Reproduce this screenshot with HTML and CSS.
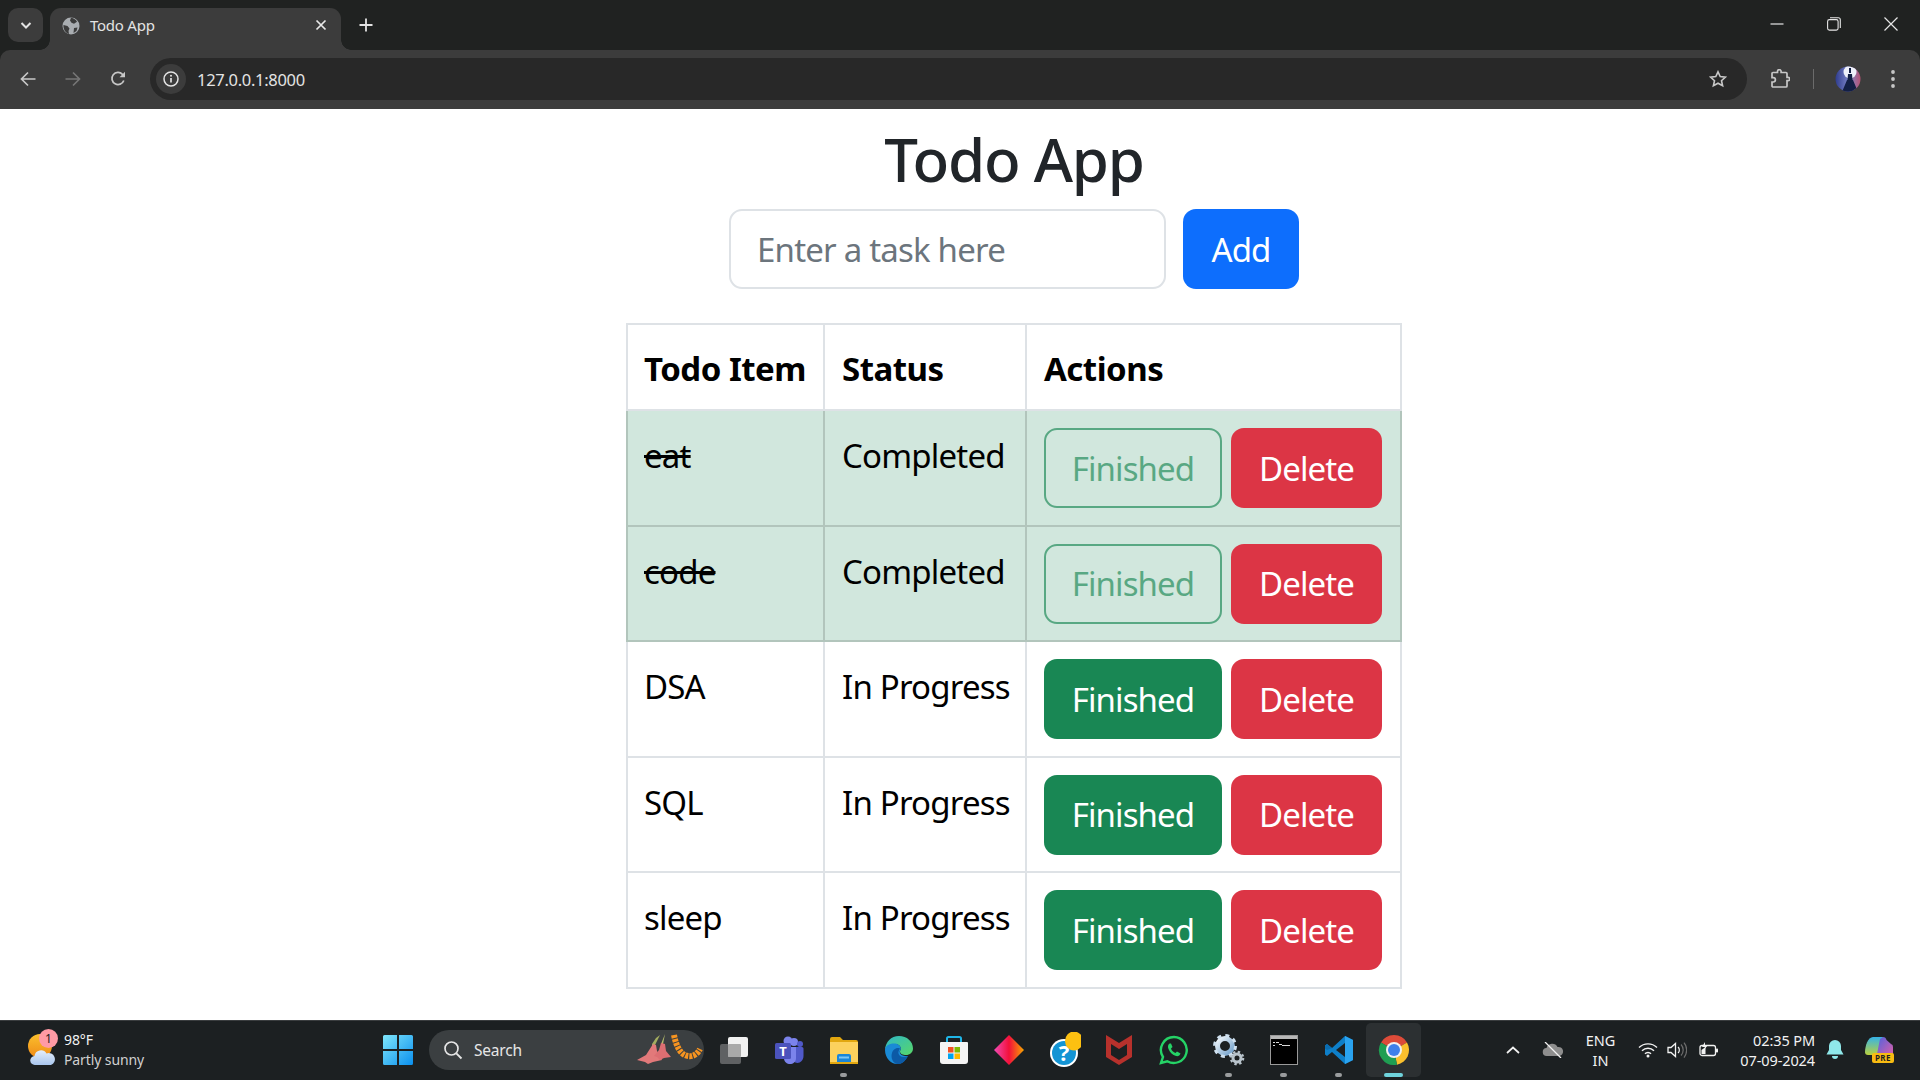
FILE: index.html
```html
<!DOCTYPE html>
<html lang="en">
<head>
<meta charset="utf-8">
<title>Todo App</title>
<link rel="stylesheet" href="styles.css">
</head>
<body>
<div class="screen">
  <header class="tabstrip">
    <div class="tab-search"><svg width="14" height="14" viewBox="0 0 14 14"><path d="M2.5 5l4.5 4.5L11.500 5" fill="none" stroke="#e3e3e3" stroke-width="2"/></svg></div>
    <div class="tab">
      <svg class="globe" width="18" height="18" viewBox="0 0 18 18"><circle cx="9" cy="9" r="8.500" fill="#a9adb1"/><path d="M9 .8c3 .5 5 2 6 4l-3 2-2.500-1L8 3.500zM1.500 8l4 1 2 2.500-1 2.500.5 3C3.500 16 1 12 1.500 8zM12 11l3.500-.5-1 3.500-3 2z" fill="#3c3c3c"/></svg>
      <span class="tab-title">Todo App</span>
      <svg class="tab-close" width="12" height="12" viewBox="0 0 12 12"><path d="M1.500 1.500l9 9M10.500 1.500l-9 9" stroke="#e8e8e8" stroke-width="1.700"/></svg>
    </div>
    <svg class="new-tab" width="14" height="14" viewBox="0 0 14 14"><path d="M7 .5v13M.5 7h13" stroke="#e3e3e3" stroke-width="1.800"/></svg>
    <div class="win-controls">
      <svg width="14" height="14" viewBox="0 0 14 14"><path d="M.5 7h13" stroke="#e6e6e6" stroke-width="1.200"/></svg>
      <svg width="14" height="14" viewBox="0 0 14 14"><rect x=".6" y="2.600" width="10.500" height="10.500" rx="1.800" fill="none" stroke="#e6e6e6" stroke-width="1.100"/><path d="M3 .7h8.300a2 2 0 0 1 2 2V11" fill="none" stroke="#e6e6e6" stroke-width="1.100"/></svg>
      <svg width="14" height="14" viewBox="0 0 14 14"><path d="M.5.500l13 13M13.500.500l-13 13" stroke="#e6e6e6" stroke-width="1.200"/></svg>
    </div>
  </header>

  <nav class="toolbar">
    <svg class="nav-icon" width="16" height="16" viewBox="0 0 16 16"><path d="M15.500 8H1.500M8 1.500L1.500 8 8 14.500" fill="none" stroke="#c7c7c7" stroke-width="1.700"/></svg>
    <svg class="nav-icon" width="16" height="16" viewBox="0 0 16 16"><path d="M.5 8h14M8 1.500L14.500 8 8 14.500" fill="none" stroke="#757575" stroke-width="1.700"/></svg>
    <svg class="nav-icon" width="16" height="16" viewBox="0 0 16 16"><path d="M13.800 9.500A6.100 6.100 0 1 1 12.500 3.300L14.500 5.200" fill="none" stroke="#c7c7c7" stroke-width="1.700"/><path d="M15 .8v5.500H9.500z" fill="#c7c7c7"/></svg>
    <div class="omnibox">
      <span class="info-chip"><svg width="16" height="16" viewBox="0 0 16 16"><circle cx="8" cy="8" r="7" fill="none" stroke="#e3e3e3" stroke-width="1.500"/><path d="M8 7v4.500" stroke="#e3e3e3" stroke-width="1.700"/><circle cx="8" cy="4.800" r="1" fill="#e3e3e3"/></svg></span>
      <span class="url">127.0.0.1:8000</span>
      <svg class="star" width="18" height="18" viewBox="0 0 18 18"><path d="M9 1.800l2.200 4.800 5.200.6-3.900 3.500 1.100 5.100L9 13.200l-4.600 2.600 1.100-5.100-3.900-3.500 5.200-.6z" fill="none" stroke="#c7c7c7" stroke-width="1.600"/></svg>
    </div>
    <svg class="puzzle" width="20" height="20" viewBox="0 0 20 20"><path d="M7.500 3.500V2.500a1.800 1.800 0 0 1 3.600 0v1H16a1 1 0 0 1 1 1v3.800h1a1.700 1.700 0 0 1 0 3.400h-1V17a1 1 0 0 1-1 1H3a1 1 0 0 1-1-1v-4h1.200a2.200 2.200 0 0 0 0-4.400H2V4.500a1 1 0 0 1 1-1z" fill="none" stroke="#c7c7c7" stroke-width="1.700"/></svg>
    <span class="tool-sep"></span>
    <svg class="avatar" width="26" height="26" viewBox="0 0 26 26"><defs><linearGradient id="avbg" x1="0" y1="0" x2="1" y2="0"><stop offset="0" stop-color="#2c3a8c"/><stop offset=".55" stop-color="#7f86c9"/><stop offset="1" stop-color="#b8506f"/></linearGradient><clipPath id="avclip"><circle cx="13" cy="13" r="12.500"/></clipPath></defs><g clip-path="url(#avclip)"><rect width="26" height="26" fill="url(#avbg)"/><path d="M0 24h26v2H0z" fill="#1f2a5c"/><circle cx="15" cy="6" r="6.500" fill="#eef0fa"/><path d="M14 2h2v5h-2zM13 8h4l.5 6h-5zM12 14h6l5 12H7z" fill="#131f45"/></g></svg>
    <svg class="kebab" width="6" height="20" viewBox="0 0 6 20"><circle cx="3" cy="3" r="1.900" fill="#c7c7c7"/><circle cx="3" cy="10" r="1.900" fill="#c7c7c7"/><circle cx="3" cy="17" r="1.900" fill="#c7c7c7"/></svg>
  </nav>

  <main class="page">
    <h1 class="title">Todo App</h1>
    <form class="add-form">
      <input class="task-input" type="text" placeholder="Enter a task here">
      <button class="btn btn-add" type="button">Add</button>
    </form>
    <table class="todo-table">
      <thead>
        <tr><th class="col-item">Todo Item</th><th class="col-status">Status</th><th class="col-actions">Actions</th></tr>
      </thead>
      <tbody>
        <tr class="done">
          <td><s>eat</s></td><td>Completed</td>
          <td><div class="actions"><button class="btn btn-finished is-disabled" type="button">Finished</button><button class="btn btn-delete" type="button">Delete</button></div></td>
        </tr>
        <tr class="done">
          <td><s>code</s></td><td>Completed</td>
          <td><div class="actions"><button class="btn btn-finished is-disabled" type="button">Finished</button><button class="btn btn-delete" type="button">Delete</button></div></td>
        </tr>
        <tr>
          <td>DSA</td><td>In Progress</td>
          <td><div class="actions"><button class="btn btn-finished" type="button">Finished</button><button class="btn btn-delete" type="button">Delete</button></div></td>
        </tr>
        <tr>
          <td>SQL</td><td>In Progress</td>
          <td><div class="actions"><button class="btn btn-finished" type="button">Finished</button><button class="btn btn-delete" type="button">Delete</button></div></td>
        </tr>
        <tr>
          <td>sleep</td><td>In Progress</td>
          <td><div class="actions"><button class="btn btn-finished" type="button">Finished</button><button class="btn btn-delete" type="button">Delete</button></div></td>
        </tr>
      </tbody>
    </table>
  </main>

  <footer class="taskbar">
    <div class="weather">
      <span class="weather-icon">
        <svg width="28" height="36" viewBox="0 0 28 36"><defs><linearGradient id="sun" x1="0" y1="0" x2="0" y2="1"><stop offset="0" stop-color="#fbc02d"/><stop offset="1" stop-color="#ef8a17"/></linearGradient><linearGradient id="cloud" x1="0" y1="0" x2="0" y2="1"><stop offset="0" stop-color="#e4eefb"/><stop offset="1" stop-color="#a9c6ee"/></linearGradient></defs><circle cx="12" cy="14" r="12" fill="url(#sun)"/><path d="M7 33a4.500 4.500 0 0 1-.5-9 6.500 6.500 0 0 1 12-2.500 5.500 5.500 0 0 1 4.500 11.500z" fill="url(#cloud)"/></svg>
        <span class="weather-badge">1</span>
      </span>
      <span class="weather-text"><span>98°F</span><span>Partly sunny</span></span>
    </div>
    <svg class="start" width="30" height="30" viewBox="0 0 30 30"><defs><linearGradient id="win" x1="0" y1="0" x2="1" y2="1"><stop offset="0" stop-color="#7fe6fb"/><stop offset="1" stop-color="#0a8fee"/></linearGradient></defs><path d="M0 1.500A1.500 1.500 0 0 1 1.500 0H14v14H0zM16 0h12.500A1.500 1.500 0 0 1 30 1.500V14H16zM0 16h14v14H1.500A1.500 1.500 0 0 1 0 28.500zM16 16h14v12.500a1.500 1.500 0 0 1-1.500 1.500H16z" fill="url(#win)"/></svg>
    <div class="search-pill">
      <svg width="20" height="20" viewBox="0 0 20 20"><circle cx="8.500" cy="8.500" r="6.500" fill="none" stroke="#e6e6e6" stroke-width="1.700"/><path d="M13.300 13.300L18.500 18.500" stroke="#e6e6e6" stroke-width="1.900"/></svg>
      <span class="search-label">Search</span>
      <svg class="search-art" width="68" height="40" viewBox="0 0 68 40"><path d="M24 5l-2 4-3 6 1 6-4-1 0-6 4-6z" fill="#a3ad5f"/><path d="M17 14l3 1 1 6 5 9-9 2-5 2-3-2-8-2 9-5z" fill="#e2797a"/><path d="M29 4l-1 5-1 5 2 6-4-1 0-5 2-5z" fill="#b4bb6b"/><path d="M25 13l4 1 1 7 5 6-7 1-4 2-3-3-3-1 5-6z" fill="#dc6e72"/><path d="M38 5C40 15 44 25 52 26 58 27 62 23 64 19" fill="none" stroke="#f79420" stroke-width="6" stroke-dasharray="3 1"/></svg>
    </div>
    <div class="apps">
      <span class="app"><svg width="30" height="30" viewBox="0 0 30 30"><rect x="1" y="9" width="21" height="20" rx="2" fill="#5f6163"/><rect x="9" y="2" width="20" height="20" rx="2" fill="#f1f1f1"/><rect x="9" y="9" width="13" height="13" rx="1" fill="#a9a9a9"/></svg></span>
      <span class="app"><svg width="30" height="30" viewBox="0 0 30 30"><circle cx="20" cy="7" r="4" fill="#7b83eb"/><circle cx="26" cy="9" r="3" fill="#5059c9"/><path d="M17 12h11a1.500 1.500 0 0 1 1.500 1.500V21c0 4-3 7-6 7s-6-3-6.500-7z" fill="#5059c9"/><path d="M10 12h12v11c0 4-3 6-6 6s-6-2-6-6z" fill="#7b83eb"/><circle cx="14" cy="6" r="4.500" fill="#7b83eb"/><rect x="1" y="8" width="16" height="16" rx="1.500" fill="#4b53bc"/><text x="9" y="21" text-anchor="middle" class="teams-t">T</text></svg></span>
      <span class="app app-dot"><svg width="30" height="30" viewBox="0 0 30 30"><path d="M1 4a2 2 0 0 1 2-2h8l3 3h13a2 2 0 0 1 2 2v3H1z" fill="#e2a70f"/><path d="M1 7h28v21a1 1 0 0 1-1 1H2a1 1 0 0 1-1-1z" fill="#fcd15d"/><path d="M8 21a2 2 0 0 1 2-2h10a2 2 0 0 1 2 2v8H8z" fill="#1a86d9"/><rect x="10" y="21.500" width="10" height="2" fill="#7cc6f6"/><rect x="1" y="27" width="28" height="2" fill="#e2a70f"/></svg></span>
      <span class="app"><svg width="30" height="30" viewBox="0 0 30 30"><defs><linearGradient id="edge1" x1="0" y1="0" x2="1" y2="1"><stop offset="0" stop-color="#2fb8c8"/><stop offset="1" stop-color="#58d768"/></linearGradient></defs><path d="M15 1c8 0 14 5.500 14 12.500 0 4-3.200 6.500-7 6.500-3 0-6-1-6-3.500 0-1 .8-1.500.8-3C16.800 11 14 9 11 9 6 9 1.500 12 1 15 1.500 7 7 1 15 1z" fill="url(#edge1)"/><path d="M1 15c0-4 4-6.500 9-6.500 3.500 0 6.800 2 6.800 5 0 1.500-1 2-1 3 0 4 5 5 8 4.500-2.500 5-6 8-10.800 8C7 29 1 23 1 15z" fill="#1a8ad6"/><path d="M13 29c-4-1-6.500-6-5-11 1-3 4-6 8-4.500-1 2-2 3-1.500 5 .8 3.500 5 4.500 9.500 2.500C21.500 26 18 29.500 13 29z" fill="#0c5aa6"/></svg></span>
      <span class="app"><svg width="30" height="30" viewBox="0 0 30 30"><path d="M8 7V3.500A1.500 1.500 0 0 1 9.500 2h11A1.500 1.500 0 0 1 22 3.500V7" fill="none" stroke="#1fb6e8" stroke-width="2"/><path d="M2 7h26a1 1 0 0 1 1 1v18a3 3 0 0 1-3 3H4a3 3 0 0 1-3-3V8a1 1 0 0 1 1-1z" fill="#f4f4f4"/><rect x="9" y="12" width="5.500" height="5.500" fill="#f25022"/><rect x="15.500" y="12" width="5.500" height="5.500" fill="#7fba00"/><rect x="9" y="18.500" width="5.500" height="5.500" fill="#00a4ef"/><rect x="15.500" y="18.500" width="5.500" height="5.500" fill="#ffb900"/></svg></span>
      <span class="app"><svg width="30" height="30" viewBox="0 0 30 30"><defs><linearGradient id="dia" x1="0" y1="0" x2="1" y2="0"><stop offset="0" stop-color="#f04bb6"/><stop offset=".5" stop-color="#f3103a"/><stop offset="1" stop-color="#f7a600"/></linearGradient></defs><path d="M15 0l15 15-15 15L0 15z" fill="url(#dia)"/></svg></span>
      <span class="app"><svg width="34" height="36" viewBox="-2 0 34 36"><circle cx="15" cy="21" r="14" fill="#fff"/><circle cx="15" cy="21" r="12" fill="#1494d4"/><text x="15" y="29" text-anchor="middle" class="help-q">?</text><ellipse cx="25" cy="9" rx="9" ry="9.500" fill="#fdc011"/></svg></span>
      <span class="app"><svg width="28" height="32" viewBox="0 0 28 32"><path d="M1 1l13 8 13-8v22L14 31 1 23zM6 10v11l8 5 8-5V10l-8 5z" fill="#b7312c" fill-rule="evenodd"/></svg></span>
      <span class="app"><svg width="30" height="30" viewBox="0 0 30 30"><path d="M15 2a13 13 0 0 0-11 20L2 28l6.300-1.700A13 13 0 1 0 15 2z" fill="none" stroke="#25d366" stroke-width="2.400"/><path d="M10.500 8.500c-1.500 1-2 3-1 5.500 1.500 3.500 4 6 7.500 7 2 .5 4-.5 4.500-2.500l-3.500-2-1.500 1.500c-2-.5-4-2.500-4.500-4.500l1.500-1.500-1.500-3.500z" fill="#25d366"/></svg></span>
      <span class="app app-dot"><svg width="32" height="32" viewBox="0 0 32 32"><defs><linearGradient id="gear" x1="0" y1="0" x2="1" y2="1"><stop offset="0" stop-color="#f2f7fb"/><stop offset="1" stop-color="#6f9fcb"/></linearGradient></defs><circle cx="12" cy="12" r="7.500" fill="none" stroke="url(#gear)" stroke-width="5"/><circle cx="12" cy="12" r="10.500" fill="none" stroke="#cfe0ef" stroke-width="3" stroke-dasharray="4 4.250"/><circle cx="24" cy="24" r="4" fill="none" stroke="#b9c4cc" stroke-width="3"/><circle cx="24" cy="24" r="6.200" fill="none" stroke="#b9c4cc" stroke-width="2.200" stroke-dasharray="2.400 2.470"/></svg></span>
      <span class="app app-dot"><svg width="28" height="30" viewBox="0 0 28 30"><rect x=".5" y=".5" width="27" height="29" fill="#000" stroke="#9a9a9a"/><rect x="1" y="1" width="26" height="3" fill="#b8b8b8"/><path d="M3 7h2v1H3zM6 7h3v1H6zM9 9h3v1H9zM3 10h2v1H3zM12 10h8v1h-8z" fill="#d9d9d9"/></svg></span>
      <span class="app app-dot"><svg width="30" height="30" viewBox="0 0 30 30"><path d="M21 1l8 4v20l-8 4L8 17l-5 4-2-1.500v-9L3 9l5 4z" fill="#0e7fc9"/><path d="M21 8L12 15l9 7z" fill="#1c2022"/><path d="M21 1l8 4v20l-8 4z" fill="#2aa3f0"/><path d="M3 9l5 4-5 2-2-1.500V10.500z" fill="#0a6cb0"/></svg></span>
      <span class="app app-active"><svg width="32" height="32" viewBox="0 0 32 32"><path d="M16 16L3 8.500A15 15 0 0 1 29 8.500z" fill="#dd4b39"/><path d="M16 16L29 8.500A15 15 0 0 1 19 30.700z" fill="#fbc02d"/><path d="M16 16L19 30.700A15 15 0 0 1 3 8.500z" fill="#1f9e52"/><circle cx="16" cy="16" r="8" fill="#f1f1f1"/><circle cx="16" cy="16" r="6" fill="#3f80ea"/></svg></span>
    </div>
    <div class="tray">
      <svg class="tray-caret" width="14" height="8" viewBox="0 0 14 8"><path d="M1 7l6-5.500L13 7" fill="none" stroke="#f2f2f2" stroke-width="1.700"/></svg>
      <svg class="tray-cloud" width="22" height="16" viewBox="0 0 22 16"><path d="M5 14a4 4 0 0 1-.5-8 6 6 0 0 1 11-1 4.500 4.500 0 0 1 2 9z" fill="#8e8e8e"/><path d="M3 0l16 16" stroke="#f2f2f2" stroke-width="1.300"/></svg>
      <span class="lang"><span>ENG</span><span>IN</span></span>
      <svg class="tray-wifi" width="20" height="16" viewBox="0 0 20 16"><path d="M1 5.500a13 13 0 0 1 18 0M4 8.800a8.500 8.500 0 0 1 12 0M7 11.800a4 4 0 0 1 6 0" fill="none" stroke="#f2f2f2" stroke-width="1.400"/><circle cx="10" cy="14" r="1.500" fill="#f2f2f2"/></svg>
      <svg class="tray-sound" width="20" height="18" viewBox="0 0 20 18"><path d="M1 6.500h3l4.500-4v13L4 11.500H1z" fill="none" stroke="#f2f2f2" stroke-width="1.300"/><path d="M11 6a4 4 0 0 1 0 6" fill="none" stroke="#f2f2f2" stroke-width="1.200"/><path d="M14 3.500a8 8 0 0 1 0 11M17 1.500a12 12 0 0 1 0 15" fill="none" stroke="#6d6d6d" stroke-width="1.200"/></svg>
      <svg class="tray-battery" width="20" height="16" viewBox="0 0 20 16"><rect x="1" y="3.500" width="15.500" height="10" rx="2" fill="none" stroke="#f2f2f2" stroke-width="1.300"/><rect x="17" y="6.500" width="2" height="4" rx=".8" fill="#f2f2f2"/><path d="M2.500 12V8l4-3v7z" fill="#f2f2f2"/><path d="M6 0L3 5h3l-1 3 4-5H6z" fill="#f2f2f2"/></svg>
      <span class="clock"><span>02:35 PM</span><span>07-09-2024</span></span>
      <svg class="tray-bell" width="18" height="20" viewBox="0 0 18 20"><path d="M9 0a6 6 0 0 1 6 6v4l2.500 4.500H.5L3 10V6a6 6 0 0 1 6-6z" fill="#8fe8ea"/><path d="M6 16h6a3 3 0 0 1-6 0z" fill="#8fe8ea"/></svg>
      <svg class="tray-copilot" width="30" height="30" viewBox="0 0 30 30"><defs><linearGradient id="cp1" x1="0" y1="0" x2="0" y2="1"><stop offset="0" stop-color="#35b3e8"/><stop offset="1" stop-color="#b9d13d"/></linearGradient><linearGradient id="cp2" x1="0" y1="0" x2="1" y2="1"><stop offset="0" stop-color="#4a63e0"/><stop offset="1" stop-color="#e85fa5"/></linearGradient></defs><path d="M8 2h10l-5 18H3a3 3 0 0 1-3-3c0-6 3-15 8-15z" fill="url(#cp1)"/><path d="M18 2c2 0 3 1 3.500 3L26 9a3 3 0 0 1 2 3v8c0 3-3 4-5 4H11l4-20z" fill="url(#cp2)"/><rect x="7" y="18" width="22" height="10" rx="2" fill="#f8bb12"/><text x="18" y="26" text-anchor="middle" class="pre-label">PRE</text></svg>
    </div>
  </footer>
</div>
</body>
</html>
```

FILE: styles.css
```css
* { box-sizing: border-box; }

html, body { margin: 0; padding: 0; }

body {
  font-family: "Noto Sans", "Open Sans", "Liberation Sans", sans-serif;
  background: #fff;
}

.screen {
  width: 1920px;
  height: 1080px;
  display: flex;
  flex-direction: column;
  overflow: hidden;
  background: #202221;
}

/* Browser chrome */
.tabstrip {
  height: 50px;
  flex: none;
  display: flex;
  align-items: flex-end;
  padding-left: 8px;
}

.tab-search {
  width: 35px;
  height: 34px;
  margin-bottom: 8px;
  border-radius: 10px;
  background: #3c3c3c;
  display: flex;
  align-items: center;
  justify-content: center;
}

.tab {
  position: relative;
  width: 291px;
  height: 42px;
  margin-left: 7px;
  padding: 0 14px 0 12px;
  display: flex;
  align-items: center;
  gap: 10px;
  background: #3c3c3c;
  border-radius: 11px 11px 0 0;
}

.tab::before,
.tab::after {
  content: "";
  position: absolute;
  bottom: 0;
  width: 10px;
  height: 10px;
}

.tab::before {
  left: -10px;
  background: radial-gradient(circle at 0 0, transparent 9.500px, #3c3c3c 10px);
}

.tab::after {
  right: -10px;
  background: radial-gradient(circle at 100% 0, transparent 9.500px, #3c3c3c 10px);
}

.globe { flex: none; margin-bottom: 6px; }

.tab-title {
  flex: 1;
  margin-bottom: 8px;
  color: #e3e3e3;
  font-size: 15px;
  letter-spacing: -.25px;
}

.tab-close { margin-bottom: 8px; }

.new-tab { margin: 0 0 18px 18px; }

.win-controls {
  margin-left: auto;
  margin-bottom: 19px;
  padding-right: 22px;
  display: flex;
  gap: 43px;
}

.toolbar {
  height: 59px;
  flex: none;
  display: flex;
  align-items: center;
  background: #3c3c3c;
  padding: 0 0 1px 20px;
  border-radius: 10px 10px 0 0;
}

.nav-icon { margin-right: 29px; }

.omnibox {
  width: 1597px;
  height: 42px;
  margin-left: -5px;
  padding: 0 20px 0 6px;
  display: flex;
  align-items: center;
  background: #282828;
  border-radius: 21px;
}

.info-chip {
  width: 30px;
  height: 30px;
  display: flex;
  align-items: center;
  justify-content: center;
  background: #3c3c3c;
  border-radius: 50%;
}

.url {
  margin-left: 11px;
  color: #e3e3e3;
  font-size: 16.500px;
  letter-spacing: -.3px;
}

.star { margin-left: auto; }

.puzzle { margin-left: 23px; }

.tool-sep {
  width: 1px;
  height: 20px;
  margin-left: 23px;
  background: #6b6b6b;
}

.avatar { margin-left: 21px; }

.kebab { margin-left: 29px; }

/* Page */
.page {
  flex: 1;
  min-height: 0;
  padding: 10px 0 0 108px;
  display: flex;
  flex-direction: column;
  align-items: center;
  background: #fff;
  color: #212529;
}

.title {
  margin: 0 0 10px;
  font-size: 60px;
  line-height: 80px;
  font-weight: 500;
  letter-spacing: -1.200px;
}

.add-form {
  display: flex;
  gap: 17px;
  margin-bottom: 34px;
}

.task-input {
  width: 437px;
  height: 80px;
  padding: 0 26px;
  border: 2px solid #dee2e6;
  border-radius: 13px;
  background: #fff;
  font-family: inherit;
  font-size: 33px;
  letter-spacing: -.8px;
  color: #212529;
}

.task-input::placeholder { color: #6c757d; opacity: 1; }

.btn {
  height: 80px;
  padding: 0;
  border: 2px solid transparent;
  border-radius: 13px;
  font-family: inherit;
  font-size: 33px;
  letter-spacing: -.9px;
  color: #fff;
  text-align: center;
}

.btn-add { width: 116px; background: #0d6efd; }

.btn-finished { width: 178px; background: #198754; }

.btn-finished.is-disabled {
  background: transparent;
  border-color: #198754;
  color: #198754;
  opacity: .65;
}

.btn-delete { width: 151px; background: #dc3545; }

.actions { display: flex; gap: 9px; }

.todo-table {
  width: 774px;
  table-layout: fixed;
  border-collapse: collapse;
  color: #000;
  font-size: 33px;
  line-height: 55px;
  white-space: nowrap;
}

.todo-table th,
.todo-table td {
  padding: 17px 17px 16.600px;
  border: 2px solid #dee2e6;
  text-align: left;
  vertical-align: top;
  letter-spacing: -.8px;
}

.todo-table th {
  padding-top: 16px;
  padding-bottom: 13px;
  font-weight: 700;
  letter-spacing: -.5px;
}

.todo-table th:first-child,
.todo-table td:first-child { padding-left: 16px; }

.col-item { width: 197px; }

.col-status { width: 202px; }

.col-actions { width: 375px; }

.done td {
  background: #d1e7dd;
  border-color: #b2c5bc;
}

/* Taskbar */
.taskbar {
  height: 60px;
  flex: none;
  display: flex;
  align-items: center;
  padding-bottom: 1px;
  background: #1c2022;
  border-top: 1px solid #3a3d3f;
  color: #f2f2f2;
}

.weather {
  width: 383px;
  padding-left: 28px;
  display: flex;
  align-items: center;
  gap: 8px;
}

.weather-icon { position: relative; display: flex; }

.weather-badge {
  position: absolute;
  top: -3px;
  left: 11px;
  width: 19px;
  height: 19px;
  border-radius: 50%;
  background: #ff9aa5;
  color: #1c2022;
  font-size: 12px;
  line-height: 19px;
  text-align: center;
}

.weather-text {
  display: flex;
  flex-direction: column;
  font-size: 14px;
  line-height: 20px;
  letter-spacing: -.1px;
}

.weather-text span:last-child { color: #d0d0d0; }

.start { flex: none; }

.search-pill {
  width: 275px;
  height: 40px;
  margin-left: 16px;
  padding: 0 0 0 14px;
  display: flex;
  align-items: center;
  gap: 11px;
  background: #3b3f41;
  border-radius: 20px;
}

.search-label { font-size: 15.500px; letter-spacing: -.2px; color: #e6e6e6; }

.search-art { margin-left: auto; }

.apps { margin-left: 2px; display: flex; }

.app {
  position: relative;
  width: 55px;
  height: 54px;
  display: flex;
  align-items: center;
  justify-content: center;
}

.app-dot::after {
  content: "";
  position: absolute;
  bottom: 0;
  left: 24px;
  width: 7px;
  height: 4px;
  border-radius: 2px;
  background: #9a9c9e;
}

.app-active { background: #2c3032; border-radius: 5px; }

.app-active::after {
  content: "";
  position: absolute;
  bottom: 0;
  left: 18px;
  width: 19px;
  height: 4px;
  border-radius: 2px;
  background: #6fd3dc;
}

.teams-t { font: 700 13px "Noto Sans", sans-serif; fill: #fff; }

.help-q { font: 700 22px "Noto Sans", sans-serif; fill: #fff; }

.pre-label { font: 700 8px "Noto Sans", sans-serif; fill: #1c2022; letter-spacing: .5px; }

.tray { margin-left: auto; display: flex; align-items: center; padding-right: 25px; }

.tray-cloud { margin-left: 21.500px; }

.lang {
  width: 50px;
  margin-left: 12px;
  display: flex;
  flex-direction: column;
  align-items: center;
  font-size: 14.500px;
  line-height: 20px;
}

.tray-wifi { margin-left: 12px; }

.tray-sound { margin-left: 9px; }

.tray-battery { margin-left: 12px; }

.clock {
  width: 83px;
  margin-left: 13.500px;
  display: flex;
  flex-direction: column;
  align-items: flex-end;
  font-size: 14.500px;
  line-height: 20px;
  letter-spacing: -.1px;
}

.tray-bell { margin-left: 11px; }

.tray-copilot { margin-left: 21px; }
```
